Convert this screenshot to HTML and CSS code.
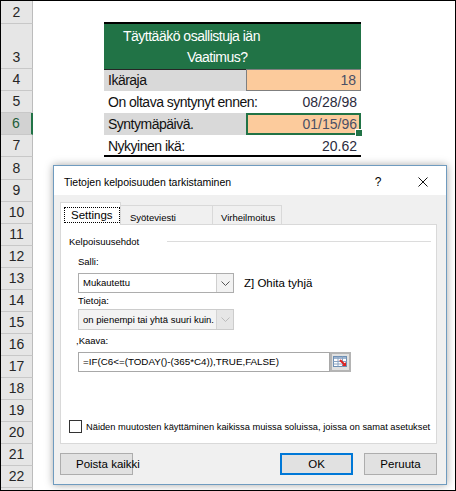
FILE: index.html
```html
<!DOCTYPE html>
<html lang="fi">
<head>
  <meta charset="UTF-8" />
  <title>Tietojen kelpoisuus</title>
  <link rel="stylesheet" href="styles.css">
</head>
<body>

  <div class="sheet">
    <div class="row r2"><div class="hd">2</div><div class="pair top"></div></div>
    <div class="row r3">
      <div class="hd">3</div>
      <div class="banner">
        <div class="l1">Täyttääkö osallistuja iän</div>
        <div class="l2">Vaatimus?</div>
      </div>
    </div>
    <div class="row r4">
      <div class="hd">4</div>
      <div class="pair"><div class="lbl shade edge">Ikäraja</div><div class="val input">18</div></div>
    </div>
    <div class="row">
      <div class="hd">5</div>
      <div class="pair"><div class="lbl">On oltava syntynyt ennen:</div><div class="val">08/28/98</div></div>
    </div>
    <div class="row">
      <div class="hd sel">6</div>
      <div class="pair"><div class="lbl shade">Syntymäpäivä.</div><div class="val input active">01/15/96</div></div>
    </div>
    <div class="row">
      <div class="hd">7</div>
      <div class="pair end"><div class="lbl">Nykyinen ikä:</div><div class="val">20.62</div></div>
    </div>
    <div class="row r8"><div class="hd">8</div></div>
    <div class="row"><div class="hd">9</div></div>
    <div class="row"><div class="hd">10</div></div>
    <div class="row"><div class="hd">11</div></div>
    <div class="row"><div class="hd">12</div></div>
    <div class="row"><div class="hd">13</div></div>
    <div class="row"><div class="hd">14</div></div>
    <div class="row"><div class="hd">15</div></div>
    <div class="row"><div class="hd">16</div></div>
    <div class="row"><div class="hd">17</div></div>
    <div class="row"><div class="hd">18</div></div>
    <div class="row"><div class="hd">19</div></div>
    <div class="row"><div class="hd">20</div></div>
    <div class="row"><div class="hd">21</div></div>
    <div class="row"><div class="hd">22</div></div>
    <div class="row"><div class="hd"></div></div>

    <!-- Tietojen kelpoisuuden tarkistaminen -dialogi -->
    <div class="dialog">
      <div class="titlebar">
        <span class="title">Tietojen kelpoisuuden tarkistaminen</span>
        <span class="help">?</span>
        <svg class="close" width="10" height="10" viewBox="0 0 10 10">
          <path d="M0.5 0.5 L9.5 9.5 M9.5 0.5 L0.5 9.5" stroke="#111" stroke-width="1" fill="none"/>
        </svg>
      </div>

      <div class="body">
        <div class="tabs">
          <div class="tab on"><span class="focus">Settings</span></div>
          <div class="tab t2">Syöteviesti</div>
          <div class="tab t3">Virheilmoitus</div>
        </div>

        <div class="panel">
          <div class="legend"><span>Kelpoisuusehdot</span><i class="rule"></i></div>

          <div class="label first">Salli:</div>
          <div class="line">
            <div class="combo">
              <span class="text">Mukautettu</span>
              <span class="drop">
                <svg width="9" height="5" viewBox="0 0 9 5"><path d="M0.5 0.5 L4.5 4.5 L8.5 0.5" stroke="#555" fill="none"/></svg>
              </span>
            </div>
            <span class="ignore">Z] Ohita tyhjä</span>
          </div>

          <div class="label">Tietoja:</div>
          <div class="combo off">
            <span class="text">on pienempi tai yhtä suuri kuin.</span>
            <span class="drop">
              <svg width="9" height="5" viewBox="0 0 9 5"><path d="M0.5 0.5 L4.5 4.5 L8.5 0.5" stroke="#bbb" fill="none"/></svg>
            </span>
          </div>

          <div class="label formula-lbl">,Kaava:</div>
          <div class="line">
            <div class="formula">=IF(C6&lt;=(TODAY()-(365*C4)),TRUE,FALSE)</div>
            <div class="pick">
              <svg width="15" height="12" viewBox="0 0 15 12">
                <rect x="0.5" y="0.5" width="13" height="10" fill="#fff" stroke="#6d8fb3"/>
                <rect x="1" y="1" width="12" height="2" fill="#9db4d0"/>
                <path d="M0.5 5.5 H13.5 M0.5 8 H13.5 M5 0.5 V10.5 M9.5 0.5 V10.5" stroke="#8aa3c2" fill="none"/>
                <path d="M7 4 L12 9" stroke="#d22" stroke-width="2"/>
                <path d="M9 10 L13 10 L13 6 Z" fill="#d22"/>
              </svg>
            </div>
          </div>

          <label class="apply"><span class="box"></span>Näiden muutosten käyttäminen kaikissa muissa soluissa, joissa on samat asetukset</label>
        </div>

        <div class="buttons">
          <div class="btn clear">Poista kaikki</div>
          <div class="btn ok">OK</div>
          <div class="btn">Peruuta</div>
        </div>
      </div>
    </div>
  </div>

</body>
</html>
```

FILE: styles.css
```css
/* Perusasetukset */
* {
  box-sizing: border-box;
}

body {
  margin: 0;
  background: #fff;
  font-family: "Liberation Sans", Arial, sans-serif;
}

/* Taulukko */
.sheet {
  position: relative;
  width: 456px;
  height: 491px;
  border: 1px solid #000;
  overflow: hidden;
}

.row {
  display: flex;
  height: 22px;
  font-size: 14px;
}

.r2 { height: 23px; }
.r3 { height: 45px; }
.r8 { height: 23px; }

/* Rivinumerot */
.hd {
  flex: none;
  width: 32px;
  display: flex;
  align-items: flex-end;
  justify-content: center;
  background: #e6e6e6;
  border-right: 1px solid #bcbcbc;
  border-bottom: 1px solid #c8c8c8;
  line-height: 21px;
  color: #262626;
}

.hd.sel {
  background: #d2d2d2;
  border-right: 2px solid #217346;
  color: #1d5e3a;
}

/* Solut */
.pair {
  display: flex;
  width: 257px;
  margin-left: 71px;
}

.pair.top {
  border-bottom: 2px solid #000;
}

.pair.end {
  border-bottom: 2px solid #000;
}

.banner {
  width: 257px;
  margin-left: 71px;
  padding-top: 2px;
  background: #217346;
  color: #fff;
  letter-spacing: -0.5px;
}

.banner div {
  height: 21px;
  line-height: 21px;
}

.banner .l1 { padding-left: 19px; }
.banner .l2 { padding-left: 83px; }

.lbl {
  width: 142px;
  padding-left: 4px;
  line-height: 22px;
  letter-spacing: -0.5px;
  color: #111;
  white-space: nowrap;
}

.shade {
  background: #d9d9d9;
}

.lbl.edge {
  border-top: 1px solid #262626;
  line-height: 20px;
}

.val {
  width: 115px;
  padding-right: 4px;
  text-align: right;
  line-height: 22px;
  color: #2b2b3d;
}

.val.input {
  background: #fccb9c;
  border: 1px solid #7f7f7f;
  line-height: 20px;
  color: #4a4f66;
}

.val.active {
  position: relative;
  border: 2px solid #217346;
  line-height: 18px;
  padding-right: 2px;
}

.val.active::after {
  content: "";
  position: absolute;
  right: -4px;
  bottom: -4px;
  width: 6px;
  height: 6px;
  background: #217346;
  border: 1px solid #fff;
}

/* Dialogi */
.dialog {
  position: absolute;
  left: 52px;
  top: 164px;
  width: 394px;
  height: 320px;
  display: flex;
  flex-direction: column;
  background: #f0f0f0;
  border: 1px solid #6f9bbf;
  box-shadow: 0 0 8px rgba(0, 0, 0, 0.35);
  font-size: 9.5px;
  color: #000;
}

.titlebar {
  height: 29px;
  display: flex;
  align-items: center;
  padding: 2px 0 0 10px;
  background: #fff;
}

.title {
  font-size: 10.5px;
}

.help {
  margin-left: auto;
  width: 12px;
  text-align: center;
  font-size: 12px;
}

.close {
  margin: 0 18px 0 34px;
}

.body {
  flex: 1;
  display: flex;
  flex-direction: column;
  padding: 7px 9px 0 6px;
}

/* Välilehdet */
.tabs {
  display: flex;
  align-items: flex-end;
  height: 22px;
}

.tab {
  height: 19px;
  padding: 4px 0 0 8px;
  line-height: 16px;
  background: #f0f0f0;
  border: 1px solid #d9d9d9;
  border-bottom: 0;
  white-space: nowrap;
  overflow: hidden;
}

.tab.on {
  position: relative;
  z-index: 1;
  width: 61px;
  height: 23px;
  margin-bottom: -1px;
  padding: 4px 0 0 3px;
  background: #fff;
  font-size: 11.5px;
}

.focus {
  display: inline-block;
  padding: 0 6px;
  line-height: 14px;
  border: 1px dotted #000;
}

.tab.t2 { width: 93px; margin-left: -1px; padding-left: 9px; }
.tab.t3 { width: 70px; margin-left: -1px; }

.panel {
  height: 220px;
  display: flex;
  flex-direction: column;
  background: #fff;
  border: 1px solid #d9d9d9;
}

.legend {
  display: flex;
  align-items: center;
  height: 14px;
  margin: 9px 5px 0 8px;
}

.legend .rule {
  flex: 1;
  margin-left: 28px;
  border-top: 1px solid #dcdcdc;
}

.label {
  margin: 1px 0 0 17px;
  line-height: 14px;
}

.label.first { margin-top: 7px; }
.label.formula-lbl { margin: 4px 0 0 15px; }

.line {
  display: flex;
  align-items: center;
  margin: 4px 0 0 17px;
}

/* Pudotusvalikot */
.combo {
  display: flex;
  width: 156px;
  height: 20px;
  background: #fff;
  border: 1px solid #adadad;
}

.combo .text {
  flex: 1;
  padding-left: 4px;
  line-height: 18px;
  white-space: nowrap;
}

.combo .drop {
  width: 17px;
  display: flex;
  align-items: center;
  justify-content: center;
  background: #f2f2f2;
  border-left: 1px solid #cfcfcf;
}

.combo.off {
  height: 21px;
  margin: 1px 0 0 17px;
  background: #f3f3f3;
  border-color: #cccccc;
}

.combo.off .text { line-height: 19px; }

.combo.off .drop {
  background: #e6e6e6;
  border-left-color: #d4d4d4;
}

.ignore {
  margin-left: 10px;
  font-size: 11.5px;
}

.formula {
  width: 252px;
  height: 20px;
  padding-left: 4px;
  line-height: 18px;
  font-size: 9.8px;
  white-space: nowrap;
  border: 1px solid #a8a8a8;
}

.pick {
  width: 21px;
  height: 20px;
  display: flex;
  align-items: center;
  justify-content: center;
  background: #e1e1e1;
  border: 2px solid #b4b4b4;
}

.apply {
  display: flex;
  align-items: center;
  margin: auto 0 10px 8px;
  line-height: 12px;
  white-space: nowrap;
  font-size: 9.3px;
}

.box {
  width: 13px;
  height: 13px;
  margin-right: 4px;
  background: #fff;
  border: 1px solid #333;
}

/* Painikkeet */
.buttons {
  display: flex;
  margin-top: 9px;
}

.btn {
  width: 73px;
  height: 22px;
  line-height: 20px;
  text-align: center;
  font-size: 11.5px;
  background: #e1e1e1;
  border: 1px solid #adadad;
  white-space: nowrap;
}

.btn.clear {
  text-align: left;
  padding-left: 15px;
}

.btn.ok {
  margin: 0 11px 0 auto;
  line-height: 18px;
  border: 2px solid #0078d7;
}
```
